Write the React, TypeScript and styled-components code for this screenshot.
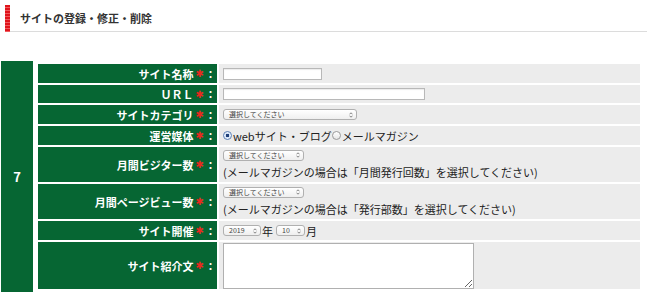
import React from "react";
import styled, { createGlobalStyle } from "styled-components";

const Global = createGlobalStyle`
  html, body { margin: 0; padding: 0; background: #fff; }
  body { font-family: "Noto Sans CJK JP", "Noto Sans", sans-serif; color: #222; }
`;

const Page = styled.div`
  width: 647px;
  height: 301px;
  overflow: hidden;
`;

const Header = styled.div`
  display: flex;
  margin: 5px 0 0 5px;
  height: 27px;
`;

const RedBar = styled.div`
  width: 5px;
  background-color: #e0141c;
  background-image: repeating-linear-gradient(0deg, rgba(255, 150, 150, 0.55) 0 1px, transparent 1px 3px);
`;

const Title = styled.h1`
  flex: 1;
  margin: 0;
  display: flex;
  align-items: center;
  padding-left: 10px;
  border-bottom: 1px solid #dcdcdc;
  font-size: 11px;
  font-weight: bold;
  color: #333;
`;

const Form = styled.div`
  display: flex;
  gap: 2px;
  margin: 29px 0 0 1px;
`;

const NumberCell = styled.div`
  width: 32px;
  height: 231px;
  background: #066633;
  color: #fff;
  font-weight: bold;
  font-size: 13px;
  display: flex;
  align-items: center;
  justify-content: center;
`;

const Grid = styled.div`
  display: grid;
  grid-template-columns: 179px 421px;
  grid-template-rows: 19px 18px 19px 19px 35px 35px 19px 47px;
  gap: 2px;
  padding: 3px 2px 3px 3px;
`;

const Label = styled.div`
  background: #066633;
  color: #fff;
  font-size: 11px;
  font-weight: bold;
  display: flex;
  align-items: center;
  justify-content: flex-end;
  padding-right: 1px;
  white-space: nowrap;
`;

const Req = styled.span`
  color: #e8281e;
  font-family: "DejaVu Sans", sans-serif;
  font-size: 10px;
  margin: 0 1px 0 2px;
`;

const Value = styled.div<{ $stack?: boolean; $top?: boolean }>`
  background: #ececec;
  display: flex;
  flex-direction: ${(p) => (p.$stack ? "column" : "row")};
  align-items: ${(p) => (p.$stack ? "flex-start" : p.$top ? "flex-start" : "center")};
  justify-content: ${(p) => (p.$stack ? "center" : "flex-start")};
  padding-left: 4px;
  padding-top: ${(p) => (p.$top ? "1px" : "0")};
  font-size: 11px;
  color: #222;
  white-space: nowrap;
`;

const TextInput = styled.input<{ $w: number }>`
  box-sizing: border-box;
  width: ${(p) => p.$w}px;
  height: 12px;
  margin: 0;
  padding: 0 2px;
  border: 1px solid #b8b8b8;
  box-shadow: inset 0 1px 1px rgba(0, 0, 0, 0.08);
  background: #fff;
  font-size: 8px;
`;

const SelectBox = styled.span<{ $w: number }>`
  box-sizing: border-box;
  display: inline-flex;
  align-items: center;
  width: ${(p) => p.$w}px;
  height: 11px;
  padding: 0 3px 0 5px;
  border: 1px solid #b0b0b0;
  border-radius: 3px;
  background: linear-gradient(#ffffff, #efefef);
  font-size: 7px;
  color: #444;
  line-height: 1;
`;

const ArrowWrap = styled.span`
  margin-left: auto;
  display: inline-flex;
`;

const Unit = styled.span`
  font-size: 11px;
  margin: 0 3px 0 1px;
`;

const RadioLabel = styled.label`
  display: inline-flex;
  align-items: center;
  font-size: 11px;
  color: #222;
`;

const Radio = styled.span<{ $on?: boolean }>`
  box-sizing: border-box;
  width: 9px;
  height: 9px;
  border-radius: 50%;
  border: 1px solid ${(p) => (p.$on ? "#5a7fb5" : "#9a9a9a")};
  background: ${(p) =>
    p.$on
      ? "radial-gradient(circle, #1f3f78 0 1.6px, #cfe0f7 2px, #fff 4px)"
      : "linear-gradient(#fff, #e6e6e6)"};
  margin-right: 1px;
`;

const Note = styled.span`
  font-size: 11px;
  margin-top: 3px;
`;

const TextArea = styled.textarea`
  box-sizing: border-box;
  width: 251px;
  height: 46px;
  margin: 0;
  border: 1px solid #b0b0b0;
  background: #fff;
  resize: both;
`;

const Arrows = () => (
  <ArrowWrap>
    <svg width="4" height="6" viewBox="0 0 4 6">
      <path d="M0.5 2.3 L2 0.8 L3.5 2.3 M0.5 3.7 L2 5.2 L3.5 3.7" stroke="#666" strokeWidth="0.8" fill="none" />
    </svg>
  </ArrowWrap>
);

const Select = ({ w, text }: { w: number; text: string }) => (
  <SelectBox $w={w}>
    {text}
    <Arrows />
  </SelectBox>
);

const L = ({ children }: { children: React.ReactNode }) => (
  <Label>
    {children}
    <Req>✱</Req>：
  </Label>
);

export default function App() {
  return (
    <Page>
      <Global />
      <Header>
        <RedBar />
        <Title>サイトの登録・修正・削除</Title>
      </Header>
      <Form>
        <NumberCell>7</NumberCell>
        <Grid>
          <L>サイト名称</L>
          <Value>
            <TextInput $w={99} />
          </Value>

          <L>ＵＲＬ</L>
          <Value>
            <TextInput $w={202} />
          </Value>

          <L>サイトカテゴリ</L>
          <Value>
            <Select w={134} text="選択してください" />
          </Value>

          <L>運営媒体</L>
          <Value>
            <RadioLabel>
              <Radio $on />
              webサイト・ブログ
            </RadioLabel>
            <RadioLabel>
              <Radio />
              メールマガジン
            </RadioLabel>
          </Value>

          <L>月間ビジター数</L>
          <Value $stack>
            <Select w={81} text="選択してください" />
            <Note>(メールマガジンの場合は「月間発行回数」を選択してください)</Note>
          </Value>

          <L>月間ページビュー数</L>
          <Value $stack>
            <Select w={81} text="選択してください" />
            <Note>(メールマガジンの場合は「発行部数」を選択してください)</Note>
          </Value>

          <L>サイト開催</L>
          <Value>
            <Select w={38} text="2019" />
            <Unit>年</Unit>
            <Select w={29} text="10" />
            <Unit>月</Unit>
          </Value>

          <L>サイト紹介文</L>
          <Value $top>
            <TextArea />
          </Value>
        </Grid>
      </Form>
    </Page>
  );
}
